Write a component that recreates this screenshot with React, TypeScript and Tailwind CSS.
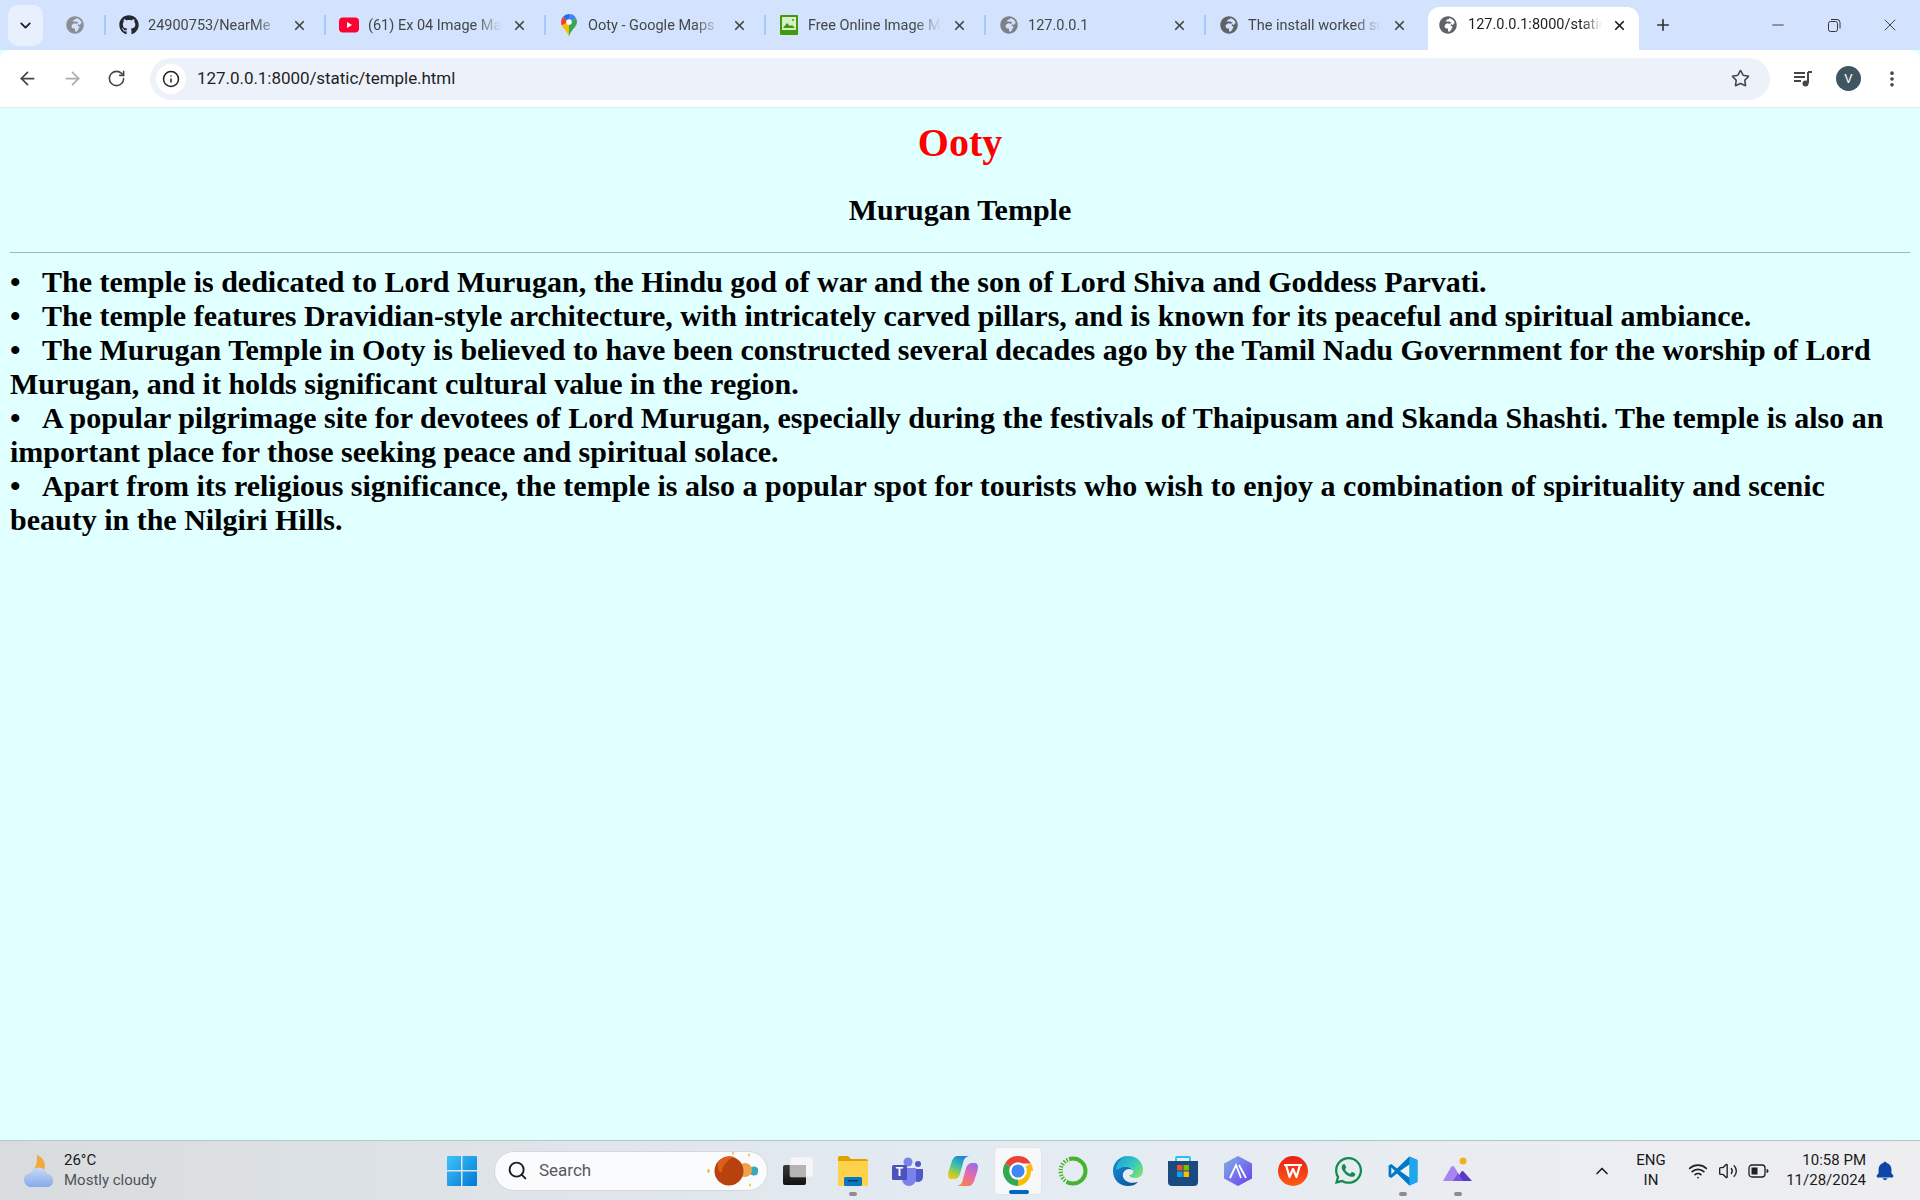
import { ArrowLeft, ArrowRight, RotateCw, Info, Star, X, Plus, Minus, ChevronDown, ChevronUp, Search, EllipsisVertical, Wifi, Volume2 } from 'lucide-react';
import { FaGithub, FaGlobeAfrica, FaWhatsapp } from 'react-icons/fa';
import { BiSolidBell } from 'react-icons/bi';

const points = [
  'The temple is dedicated to Lord Murugan, the Hindu god of war and the son of Lord Shiva and Goddess Parvati.',
  'The temple features Dravidian-style architecture, with intricately carved pillars, and is known for its peaceful and spiritual ambiance.',
  'The Murugan Temple in Ooty is believed to have been constructed several decades ago by the Tamil Nadu Government for the worship of Lord Murugan, and it holds significant cultural value in the region.',
  'A popular pilgrimage site for devotees of Lord Murugan, especially during the festivals of Thaipusam and Skanda Shashti. The temple is also an important place for those seeking peace and spiritual solace.',
  'Apart from its religious significance, the temple is also a popular spot for tourists who wish to enjoy a combination of spirituality and scenic beauty in the Nilgiri Hills.',
];

function Globe({ className = 'text-[#5f6368]' }: { className?: string }) {
  return <FaGlobeAfrica className={`w-[18px] h-[18px] ${className}`} />;
}

function YoutubeIcon() {
  return (
    <svg width="20" height="16" viewBox="0 0 20 16">
      <rect width="20" height="15" y="0.5" rx="4" fill="#ff0033" />
      <path d="M8 5l5 3-5 3z" fill="#fff" />
    </svg>
  );
}

function MapsIcon() {
  return (
    <svg width="16" height="23" viewBox="0 0 18 26">
      <path d="M9 0a9 9 0 0 0-6.800 3L9 9z" fill="#1a73e8" />
      <path d="M2.200 3A9 9 0 0 0 0 9c0 1.500.3 2.700.9 3.900L9 9z" fill="#ea4335" />
      <path d="M9 0a9 9 0 0 1 8.100 5L9 9z" fill="#4285f4" />
      <path d="M.9 12.900C2.700 16.500 7.500 20 9 26V9z" fill="#fbbc04" />
      <path d="M17.100 5A9 9 0 0 1 18 9c0 6-7.500 9-9 17V9z" fill="#34a853" />
      <circle cx="9" cy="9" r="3.200" fill="#fff" />
    </svg>
  );
}

function ImageIcon() {
  return (
    <svg width="18" height="20" viewBox="0 0 18 20">
      <rect width="18" height="20" rx="1" fill="#3f9b0b" />
      <rect x="2" y="2" width="14" height="13" fill="#d8ecc8" />
      <path d="M3 13l4-5 3 3 2-1 3 3z" fill="#3f9b0b" />
      <circle cx="13" cy="5" r="1" fill="#3f9b0b" />
    </svg>
  );
}

function Tab({ icon, title }: { icon: React.ReactNode; title: string }) {
  return (
    <div className="w-[220px] h-[20px] shrink-0 flex items-center border-l-2 border-[#a8c7fa] pl-[13px]">
      <div className="w-[20px] flex justify-center shrink-0">{icon}</div>
      <div className="ml-[9px] mt-[1px] w-[133px] overflow-hidden whitespace-nowrap text-[14.5px] leading-[20px] text-[#444746] [mask-image:linear-gradient(to_right,black_80%,transparent)]">
        {title}
      </div>
      <X className="ml-[11px] w-[15px] h-[15px] shrink-0 text-[#444746]" strokeWidth={2.8} />
    </div>
  );
}

function TaskIcon({ children, dot, active }: { children: React.ReactNode; dot?: boolean; active?: boolean }) {
  return (
    <div className={`relative w-[48px] h-[48px] flex items-center justify-center rounded-[4px] ${active ? 'bg-[#f7f8fa] border border-[#e3e4e8]' : ''}`}>
      {children}
      {dot && <div className="absolute bottom-[-1px] left-[20px] w-[8px] h-[4px] rounded-full bg-[#8a8c90]" />}
      {active && <div className="absolute bottom-[0px] left-[14px] w-[20px] h-[4px] rounded-full bg-[#0067c0]" />}
    </div>
  );
}

function StartIcon() {
  return (
    <svg width="30" height="30" viewBox="0 0 30 30">
      <defs>
        <linearGradient id="win" x1="0" y1="0" x2="1" y2="1">
          <stop offset="0" stopColor="#3fc3fb" />
          <stop offset="1" stopColor="#0078d4" />
        </linearGradient>
      </defs>
      <path d="M0 1a1 1 0 0 1 1-1h13v14H0zM15.500 0h13.500a1 1 0 0 1 1 1v13H15.500zM0 15.500h14V30H1a1 1 0 0 1-1-1zM15.500 15.500H30V29a1 1 0 0 1-1 1H15.500z" fill="url(#win)" />
    </svg>
  );
}

function WeatherIcon() {
  return (
    <svg width="32" height="32" viewBox="0 0 30 30">
      <defs>
        <linearGradient id="cld" x1="0" y1="0" x2="0" y2="1">
          <stop offset="0" stopColor="#c6dbf9" />
          <stop offset="1" stopColor="#86a9e8" />
        </linearGradient>
      </defs>
      <path d="M12 0C22 3 23 18 10 22L0 20l6-3c4-3 7-9 6-17z" fill="#f2a93b" />
      <path d="M7 30a6.500 6.500 0 0 1-1-13C8 13 11 11.500 15 12c4 .5 6 3 7 5.500A6.500 6.500 0 0 1 23 30z" fill="url(#cld)" />
    </svg>
  );
}

function DoodleIcon() {
  return (
    <svg width="54" height="44" viewBox="0 0 54 44">
      <circle cx="50" cy="22" r="4.500" fill="#3aa8b8" />
      <circle cx="41" cy="21" r="7" fill="#f0a24a" />
      <circle cx="25" cy="22" r="14.500" fill="#b8410e" />
      <path d="M14 13a14.500 14.500 0 0 1 16-5c-5 2-11 7-12 14-1 3-5 1-4-9z" fill="#d9601a" />
      <path d="M3 22l1.500-2.500L6 22l-1.500 2.500zM28 4l1-2 1 2-1 2zM44 6l1-2 1 2-1 2zM45 36l1-2 1 2-1 2z" fill="#f1b434" />
    </svg>
  );
}

function TaskViewIcon() {
  return (
    <svg width="30" height="30" viewBox="0 0 30 30">
      <defs>
        <linearGradient id="tvd" x1="0" y1="0" x2="0" y2="1">
          <stop offset="0" stopColor="#3a3a3a" />
          <stop offset="1" stopColor="#111" />
        </linearGradient>
      </defs>
      <rect x="0" y="9" width="23" height="20" rx="2" fill="url(#tvd)" />
      <rect x="7" y="1" width="23" height="20" rx="2" fill="#f6f6f8" stroke="#e2e2e6" strokeWidth="0.5" />
      <rect x="7" y="9" width="16" height="12" fill="#b4b4b6" />
    </svg>
  );
}

function ExplorerIcon() {
  return (
    <svg width="30" height="30" viewBox="0 0 30 30">
      <path d="M0 2a2 2 0 0 1 2-2h8l3 3h15a2 2 0 0 1 2 2v4H0z" fill="#e0a100" />
      <path d="M0 5h30v24a1 1 0 0 1-1 1H1a1 1 0 0 1-1-1z" fill="#ffd24d" />
      <rect x="6" y="21" width="18" height="9" rx="1.500" fill="#0a78c0" />
      <rect x="10" y="24" width="10" height="1.500" fill="#083f6e" />
    </svg>
  );
}

function TeamsIcon() {
  return (
    <div className="relative w-[32px] h-[30px]">
      <svg width="32" height="30" viewBox="0 0 32 30" className="absolute inset-0">
        <circle cx="16" cy="6" r="4.500" fill="#7b83eb" />
        <circle cx="26" cy="8" r="3" fill="#5059c9" />
        <path d="M21 13h10v8a5 5 0 0 1-8 4z" fill="#5059c9" />
        <path d="M9 12h15v11a7 7 0 0 1-14 0z" fill="#7b83eb" />
        <rect x="0" y="9" width="15" height="15" rx="1.500" fill="#4b53bc" />
      </svg>
      <span className="absolute left-0 top-[9px] w-[15px] text-center text-[12px] leading-[15px] font-bold text-white font-['Liberation_Sans',sans-serif]">T</span>
    </div>
  );
}

function CopilotIcon() {
  return (
    <svg width="30" height="30" viewBox="0 0 30 30">
      <defs>
        <linearGradient id="cpa" x1="0.700" y1="0" x2="0.200" y2="1">
          <stop offset="0" stopColor="#1a80d8" />
          <stop offset="0.45" stopColor="#3cc0b0" />
          <stop offset="0.75" stopColor="#a8cc3c" />
          <stop offset="1" stopColor="#f5c518" />
        </linearGradient>
        <linearGradient id="cpb" x1="0.800" y1="0" x2="0.200" y2="1">
          <stop offset="0" stopColor="#9a6cf0" />
          <stop offset="0.5" stopColor="#e86aa8" />
          <stop offset="1" stopColor="#f58a3a" />
        </linearGradient>
      </defs>
      <path d="M9 0h12c-4 1-5 3-6 7l-3 11c-1 3-3 5-6 5H3c-2 0-3-2-3-4 0-3 2-8 3-11C4 4 6 0 9 0z" fill="url(#cpa)" />
      <path d="M21 30H9c4-1 5-3 6-7l3-11c1-3 3-5 6-5h3c2 0 3 2 3 4 0 3-2 8-3 11-1 4-3 8-6 8z" fill="url(#cpb)" />
    </svg>
  );
}

function ChromeIcon() {
  return (
    <svg width="30" height="30" viewBox="0 0 48 48">
      <path d="M24 24L3.200 12A24 24 0 0 1 44.800 12H24z" fill="#ea4335" />
      <path d="M24 24H44.800A24 24 0 0 1 24 48z" fill="#fbbc04" />
      <path d="M44.800 12A24 24 0 0 1 48 24H24z" fill="#fbbc04" />
      <path d="M24 48A24 24 0 0 1 3.200 12L24 24z" fill="#34a853" />
      <circle cx="24" cy="24" r="14" fill="#fff" />
      <circle cx="24" cy="24" r="10.500" fill="#4285f4" />
    </svg>
  );
}

function LoaderIcon() {
  return (
    <svg width="30" height="30" viewBox="0 0 30 30">
      <circle cx="15" cy="15" r="12.500" fill="none" stroke="#45b32d" strokeWidth="4" />
      <path d="M11 3 A12.500 12.500 0 0 0 9 26" fill="none" stroke="#eef0f3" strokeWidth="4.500" strokeDasharray="1.500 1.500" />
    </svg>
  );
}

function EdgeIcon() {
  return (
    <svg width="30" height="30" viewBox="0 0 30 30">
      <defs>
        <linearGradient id="edg" x1="0" y1="0" x2="1" y2="1">
          <stop offset="0" stopColor="#1490df" />
          <stop offset="1" stopColor="#0c4f98" />
        </linearGradient>
        <linearGradient id="edt" x1="0" y1="0" x2="1" y2="0.700">
          <stop offset="0" stopColor="#1aa0d8" />
          <stop offset="0.6" stopColor="#35c8c0" />
          <stop offset="1" stopColor="#78e070" />
        </linearGradient>
      </defs>
      <path d="M15 0C6 0 0 7 0 15c0 9 7 15 15 15 4 0 7-1 10-4-7 2-13 0-15-5-1-4 2-8 6-8 3 0 4 1 5 3-3-6-10-7-16-3C6 6 10 0 15 0z" fill="url(#edg)" />
      <path d="M15 0c9 0 15 6 15 14 0 5-3 8-8 8-3 0-5-1-6-3 3 0 5-2 4-4-1-4-9-6-15-2-2 1-2 1-2 0C4 6 9 0 15 0z" fill="url(#edt)" />
    </svg>
  );
}

function StoreIcon() {
  return (
    <svg width="30" height="30" viewBox="0 0 30 30">
      <path d="M8 5V2a1 1 0 0 1 1-1h12a1 1 0 0 1 1 1v3" fill="none" stroke="#28c0f0" strokeWidth="1.800" />
      <path d="M0 5h30v21a4 4 0 0 1-4 4H4a4 4 0 0 1-4-4z" fill="#1a4b80" />
      <rect x="9" y="9" width="5.500" height="5.500" fill="#f25022" />
      <rect x="15.500" y="9" width="5.500" height="5.500" fill="#7fba00" />
      <rect x="9" y="15.500" width="5.500" height="5.500" fill="#00a4ef" />
      <rect x="15.500" y="15.500" width="5.500" height="5.500" fill="#ffb900" />
    </svg>
  );
}

function HexIcon() {
  return (
    <svg width="28" height="30" viewBox="0 0 28 30">
      <defs>
        <linearGradient id="hex" x1="0" y1="0" x2="1" y2="1">
          <stop offset="0" stopColor="#7fb4e4" />
          <stop offset="1" stopColor="#6a3cf0" />
        </linearGradient>
      </defs>
      <path d="M14 0l14 7.500v15L14 30 0 22.500v-15z" fill="url(#hex)" />
      <path d="M6 22l6-13 5 13M15 9l7 13" fill="none" stroke="#fff" strokeWidth="1.800" />
    </svg>
  );
}

function WpsIcon() {
  return (
    <svg width="30" height="30" viewBox="0 0 30 30">
      <defs>
        <linearGradient id="wps" x1="0" y1="0" x2="0" y2="1">
          <stop offset="0" stopColor="#e8201c" />
          <stop offset="1" stopColor="#ff5a10" />
        </linearGradient>
      </defs>
      <circle cx="15" cy="15" r="15" fill="url(#wps)" />
      <path d="M6 9h18M8 9l3.500 12L15 13l3.500 8L22 9" fill="none" stroke="#fff" strokeWidth="2.200" strokeLinejoin="round" />
    </svg>
  );
}

function VsCodeIcon() {
  return (
    <svg width="30" height="30" viewBox="0 0 100 100">
      <path d="M71 2L30 42 11 27l-9 5v36l9 5 19-15 41 40 27-11V13z" fill="#0078c8" />
      <path d="M71 2l27 11v74L71 98z" fill="#1fa6ec" />
      <path d="M71 28L40 50l31 22z" fill="#eef0f4" />
      <path d="M11 38v24l12-12z" fill="#eef0f4" />
    </svg>
  );
}

function MountainIcon() {
  return (
    <svg width="30" height="30" viewBox="0 0 30 30">
      <circle cx="20" cy="5" r="3.500" fill="#f5b01e" />
      <path d="M0 25L8 11c2-2 3-1 4 1l8 13z" fill="#a585ee" />
      <path d="M13 25l5-9c1-1.500 2-1.500 3 0l8 9z" fill="#5a38cc" />
      <path d="M10 25l5-8 5 8z" fill="#7a55e0" />
    </svg>
  );
}

export default function App() {
  return (
    <div className="h-screen w-full flex flex-col overflow-hidden bg-[#e0ffff] font-['Roboto',sans-serif]">
      {/* Tab strip */}
      <div className="h-[50px] shrink-0 bg-[#d3e3fd] flex items-center relative">
        <div className="ml-[8px] w-[35px] h-[41px] mt-[1px] rounded-[10px] bg-[#e9f0fd] flex items-center justify-center">
          <ChevronDown className="w-[17px] h-[17px] text-[#1f1f1f]" strokeWidth={2.5} />
        </div>
        <div className="w-[61px] flex justify-center pl-[2px]">
          <Globe className="text-[#8a8d92]" />
        </div>
        <Tab icon={<FaGithub className="w-[20px] h-[20px] text-[#24292f]" />} title="24900753/NearMe" />
        <Tab icon={<YoutubeIcon />} title="(61) Ex 04 Image Manipulation" />
        <Tab icon={<MapsIcon />} title="Ooty - Google Maps" />
        <Tab icon={<ImageIcon />} title="Free Online Image Maker" />
        <Tab icon={<Globe className="text-[#7d8085]" />} title="127.0.0.1" />
        <Tab icon={<Globe />} title="The install worked successfully" />
        <div className="ml-[4px] mt-[7px] w-[211px] h-[43px] shrink-0 bg-white rounded-t-[12px] flex items-center pl-[10px] pb-[7px]">
          <div className="w-[20px] flex justify-center shrink-0">
            <Globe />
          </div>
          <div className="ml-[10px] w-[134px] overflow-hidden whitespace-nowrap text-[14.5px] leading-[20px] text-[#1f1f1f] [mask-image:linear-gradient(to_right,black_85%,transparent)]">
            127.0.0.1:8000/static/temple.html
          </div>
          <X className="ml-[10px] w-[15px] h-[15px] shrink-0 text-[#1f1f1f]" strokeWidth={2.8} />
        </div>
        <Plus className="ml-[15px] w-[18px] h-[18px] text-[#333]" strokeWidth={2.2} />
        <div className="ml-auto flex items-center h-full">
          <div className="w-[56px] flex justify-center"><Minus className="w-[18px] h-[18px] text-[#333]" strokeWidth={1.2} /></div>
          <div className="w-[56px] flex justify-center">
            <svg width="14" height="14" viewBox="0 0 14 14" fill="none" stroke="#333">
              <rect x="1.500" y="3.500" width="9" height="10" rx="2" />
              <path d="M4 1.500h6a3 3 0 0 1 3 3v6" />
            </svg>
          </div>
          <div className="w-[58px] flex justify-center pr-[2px]"><X className="w-[20px] h-[20px] text-[#333]" strokeWidth={1.1} /></div>
        </div>
      </div>

      {/* Toolbar */}
      <div className="h-[58px] shrink-0 bg-white rounded-t-[10px] flex items-center border-b border-[#dcefe9] relative">
        <ArrowLeft className="ml-[17px] w-[21px] h-[21px] text-[#444746]" strokeWidth={2} />
        <ArrowRight className="ml-[24px] w-[21px] h-[21px] text-[#a9abac]" strokeWidth={2} />
        <RotateCw className="ml-[24px] w-[19px] h-[19px] text-[#444746]" strokeWidth={2} />
        <div className="ml-[24px] flex-1 h-[42px] rounded-full bg-[#edf2fa] flex items-center pl-[6px] pr-[20px]">
          <div className="w-[30px] h-[30px] rounded-full bg-white flex items-center justify-center">
            <Info className="w-[18px] h-[18px] text-[#1f1f1f]" strokeWidth={2} />
          </div>
          <span className="ml-[11px] mt-[1px] text-[17px] tracking-[-0.05px] text-[#1f1f1f]">127.0.0.1:8000/static/temple.html</span>
          <Star className="ml-auto w-[19px] h-[19px] text-[#444746]" strokeWidth={2} />
        </div>
        <svg className="ml-[23px]" width="20" height="18" viewBox="0 0 20 18" fill="none">
          <path d="M1 3h11M1 7h11M1 11h7" stroke="#444746" strokeWidth="1.800" />
          <path d="M15 2v11" stroke="#444746" strokeWidth="2" />
          <path d="M15 2h4" stroke="#444746" strokeWidth="2" />
          <circle cx="12.500" cy="13.500" r="3" fill="#444746" />
        </svg>
        <div className="ml-[23px] w-[25px] h-[25px] rounded-full bg-[#3f5560] text-white text-[13px] flex items-center justify-center">V</div>
        <EllipsisVertical className="ml-[21px] mr-[18px] w-[20px] h-[20px] text-[#444746]" strokeWidth={2.4} />
      </div>

      {/* Page */}
      <main className="flex-1 min-h-0 px-[10px] font-['Liberation_Serif',serif] font-bold text-black">
        <h1 className="mt-[12px] text-[40px] leading-[46px] text-center text-[#ff0000]">Ooty</h1>
        <h2 className="mt-[27px] text-[30px] leading-[34px] text-center">Murugan Temple</h2>
        <hr className="mt-[25px] border-t border-[#a8b4b4]" />
        <ul className="mt-[12px] text-[30px] leading-[34px]">
          {points.map((point) => (
            <li key={point}>
              <span className="inline-block w-[32px]">•</span>
              {point}
            </li>
          ))}
        </ul>
      </main>

      {/* Taskbar */}
      <div className="h-[60px] shrink-0 flex items-center border-t border-[#bfc2c5] bg-gradient-to-r from-[#d9dcde] via-[#e3ebf2] to-[#eeeef1] text-[15px] text-[#1a1a1a]">
        <div className="w-[447px] flex items-center shrink-0 pl-[24px]">
          <WeatherIcon />
          <div className="ml-[8px] mb-[2px] leading-[20px]">
            <div>26°C</div>
            <div className="text-[#4f5256]">Mostly cloudy</div>
          </div>
        </div>
        <StartIcon />
        <div className="ml-[17px] w-[274px] h-[40px] rounded-full bg-[#fafbfc] border border-[#d6d8dc] flex items-center pl-[12px] pr-[9px]">
          <Search className="w-[21px] h-[21px] text-[#1f1f1f]" strokeWidth={2.2} />
          <span className="ml-[11px] text-[17px] text-[#55585c]">Search</span>
          <div className="ml-auto"><DoodleIcon /></div>
        </div>
        <div className="ml-[6px] flex items-center gap-[7px]">
          <TaskIcon><TaskViewIcon /></TaskIcon>
          <TaskIcon dot><ExplorerIcon /></TaskIcon>
          <TaskIcon><TeamsIcon /></TaskIcon>
          <TaskIcon><CopilotIcon /></TaskIcon>
          <TaskIcon active><ChromeIcon /></TaskIcon>
          <TaskIcon><LoaderIcon /></TaskIcon>
          <TaskIcon><EdgeIcon /></TaskIcon>
          <TaskIcon><StoreIcon /></TaskIcon>
          <TaskIcon><HexIcon /></TaskIcon>
          <TaskIcon><WpsIcon /></TaskIcon>
          <TaskIcon><FaWhatsapp className="w-[31px] h-[31px] text-[#128a50]" /></TaskIcon>
          <TaskIcon dot><VsCodeIcon /></TaskIcon>
          <TaskIcon dot><MountainIcon /></TaskIcon>
        </div>
        <ChevronUp className="ml-[110px] w-[20px] h-[20px] text-[#1f1f1f]" strokeWidth={2} />
        <div className="ml-[15px] mb-[1px] w-[48px] text-center leading-[20px] text-[15px]">
          <div>ENG</div>
          <div>IN</div>
        </div>
        <Wifi className="ml-[13px] w-[20px] h-[20px] text-[#1f1f1f]" strokeWidth={2} />
        <Volume2 className="ml-[10px] w-[20px] h-[20px] text-[#1f1f1f]" strokeWidth={1.6} />
        <svg className="ml-[10px]" width="21" height="14" viewBox="0 0 21 14" fill="none">
          <rect x="1" y="1" width="16" height="12" rx="3" stroke="#1f1f1f" strokeWidth="1.300" />
          <rect x="3.500" y="3.500" width="6" height="7" fill="#1f1f1f" />
          <path d="M18.500 5v4a2 2 0 0 0 2-2 2 2 0 0 0-2-2z" fill="#1f1f1f" />
        </svg>
        <div className="ml-[10px] mb-[1px] w-[87px] text-right leading-[20px] text-[15px] shrink-0">
          <div>10:58 PM</div>
          <div>11/28/2024</div>
        </div>
        <BiSolidBell className="ml-[8px] w-[22px] h-[22px] text-[#0b46a8]" />
      </div>
    </div>
  );
}
